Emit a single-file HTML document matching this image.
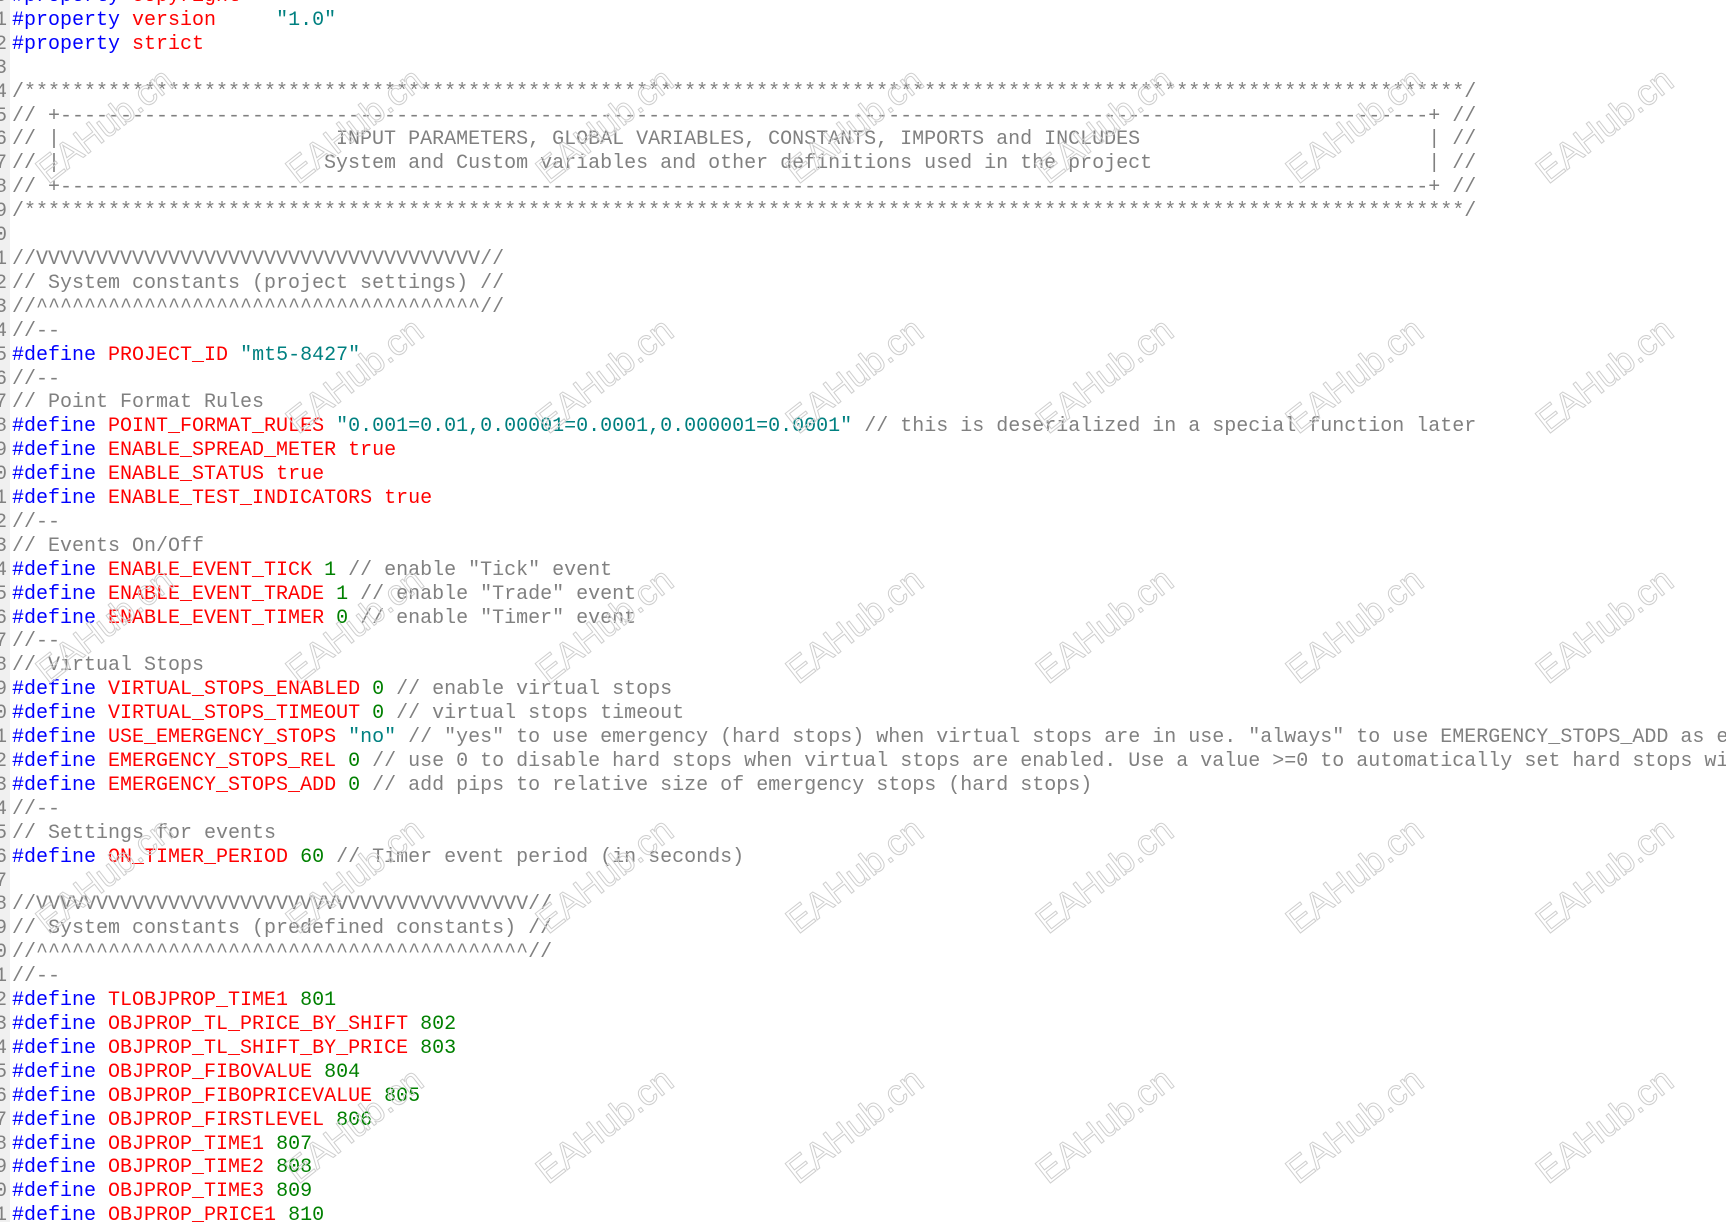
<!DOCTYPE html>
<html><head><meta charset="utf-8"><style>
html,body{margin:0;padding:0;background:#fff;width:1726px;height:1222px;overflow:hidden;position:relative}
#g{position:absolute;left:0;top:0;width:10px;height:1222px;background:#f0f0f0}
#gn{position:absolute;left:-5px;top:-15px;font:20px/23.9px "Liberation Mono",monospace;color:#808080;margin:0;white-space:pre}
#code{position:absolute;left:12px;top:-15px;width:1714px;overflow:hidden;font:20px/23.9px "Liberation Mono",monospace;margin:0;white-space:pre;color:#000}
.k{color:#0000ff}.r{color:#ff0000}.n{color:#008000}.s{color:#008080}.c{color:#808080}
#wm{position:absolute;left:0;top:0}
</style></head><body>
<div id="g"></div>
<pre id="gn">0
1
2
3
4
5
6
7
8
9
0
1
2
3
4
5
6
7
8
9
0
1
2
3
4
5
6
7
8
9
0
1
2
3
4
5
6
7
8
9
0
1
2
3
4
5
6
7
8
9
0
1</pre>
<pre id="code"><span class="k">#property</span> <span class="r">copyright</span>
<span class="k">#property</span> <span class="r">version</span>     <span class="s">"1.0"</span>
<span class="k">#property</span> <span class="r">strict</span>

<span class="c">/************************************************************************************************************************/</span>
<span class="c">// +------------------------------------------------------------------------------------------------------------------+ //</span>
<span class="c">// |                       INPUT PARAMETERS, GLOBAL VARIABLES, CONSTANTS, IMPORTS and INCLUDES                        | //</span>
<span class="c">// |                      System and Custom variables and other definitions used in the project                       | //</span>
<span class="c">// +------------------------------------------------------------------------------------------------------------------+ //</span>
<span class="c">/************************************************************************************************************************/</span>

<span class="c">//VVVVVVVVVVVVVVVVVVVVVVVVVVVVVVVVVVVVV//</span>
<span class="c">// System constants (project settings) //</span>
<span class="c">//^^^^^^^^^^^^^^^^^^^^^^^^^^^^^^^^^^^^^//</span>
<span class="c">//--</span>
<span class="k">#define</span> <span class="r">PROJECT_ID</span> <span class="s">"mt5-8427"</span>
<span class="c">//--</span>
<span class="c">// Point Format Rules</span>
<span class="k">#define</span> <span class="r">POINT_FORMAT_RULES</span> <span class="s">"0.001=0.01,0.00001=0.0001,0.000001=0.0001"</span> <span class="c">// this is deserialized in a special function later</span>
<span class="k">#define</span> <span class="r">ENABLE_SPREAD_METER</span> <span class="r">true</span>
<span class="k">#define</span> <span class="r">ENABLE_STATUS</span> <span class="r">true</span>
<span class="k">#define</span> <span class="r">ENABLE_TEST_INDICATORS</span> <span class="r">true</span>
<span class="c">//--</span>
<span class="c">// Events On/Off</span>
<span class="k">#define</span> <span class="r">ENABLE_EVENT_TICK</span> <span class="n">1</span> <span class="c">// enable "Tick" event</span>
<span class="k">#define</span> <span class="r">ENABLE_EVENT_TRADE</span> <span class="n">1</span> <span class="c">// enable "Trade" event</span>
<span class="k">#define</span> <span class="r">ENABLE_EVENT_TIMER</span> <span class="n">0</span> <span class="c">// enable "Timer" event</span>
<span class="c">//--</span>
<span class="c">// Virtual Stops</span>
<span class="k">#define</span> <span class="r">VIRTUAL_STOPS_ENABLED</span> <span class="n">0</span> <span class="c">// enable virtual stops</span>
<span class="k">#define</span> <span class="r">VIRTUAL_STOPS_TIMEOUT</span> <span class="n">0</span> <span class="c">// virtual stops timeout</span>
<span class="k">#define</span> <span class="r">USE_EMERGENCY_STOPS</span> <span class="s">"no"</span> <span class="c">// "yes" to use emergency (hard stops) when virtual stops are in use. "always" to use EMERGENCY_STOPS_ADD as emergency stops</span>
<span class="k">#define</span> <span class="r">EMERGENCY_STOPS_REL</span> <span class="n">0</span> <span class="c">// use 0 to disable hard stops when virtual stops are enabled. Use a value >=0 to automatically set hard stops with</span>
<span class="k">#define</span> <span class="r">EMERGENCY_STOPS_ADD</span> <span class="n">0</span> <span class="c">// add pips to relative size of emergency stops (hard stops)</span>
<span class="c">//--</span>
<span class="c">// Settings for events</span>
<span class="k">#define</span> <span class="r">ON_TIMER_PERIOD</span> <span class="n">60</span> <span class="c">// Timer event period (in seconds)</span>

<span class="c">//VVVVVVVVVVVVVVVVVVVVVVVVVVVVVVVVVVVVVVVVV//</span>
<span class="c">// System constants (predefined constants) //</span>
<span class="c">//^^^^^^^^^^^^^^^^^^^^^^^^^^^^^^^^^^^^^^^^^//</span>
<span class="c">//--</span>
<span class="k">#define</span> <span class="r">TLOBJPROP_TIME1</span> <span class="n">801</span>
<span class="k">#define</span> <span class="r">OBJPROP_TL_PRICE_BY_SHIFT</span> <span class="n">802</span>
<span class="k">#define</span> <span class="r">OBJPROP_TL_SHIFT_BY_PRICE</span> <span class="n">803</span>
<span class="k">#define</span> <span class="r">OBJPROP_FIBOVALUE</span> <span class="n">804</span>
<span class="k">#define</span> <span class="r">OBJPROP_FIBOPRICEVALUE</span> <span class="n">805</span>
<span class="k">#define</span> <span class="r">OBJPROP_FIRSTLEVEL</span> <span class="n">806</span>
<span class="k">#define</span> <span class="r">OBJPROP_TIME1</span> <span class="n">807</span>
<span class="k">#define</span> <span class="r">OBJPROP_TIME2</span> <span class="n">808</span>
<span class="k">#define</span> <span class="r">OBJPROP_TIME3</span> <span class="n">809</span>
<span class="k">#define</span> <span class="r">OBJPROP_PRICE1</span> <span class="n">810</span></pre>
<svg id="wm" width="1726" height="1222" xmlns="http://www.w3.org/2000/svg">
<defs><style>text{font-family:"Liberation Sans",sans-serif;font-size:36px;fill:none;stroke:#cfcfcf;stroke-width:1}</style></defs>
<g>
<text transform="translate(112,135) rotate(-38)" text-anchor="middle">EAHub.cn</text>
<text transform="translate(362,135) rotate(-38)" text-anchor="middle">EAHub.cn</text>
<text transform="translate(612,135) rotate(-38)" text-anchor="middle">EAHub.cn</text>
<text transform="translate(862,135) rotate(-38)" text-anchor="middle">EAHub.cn</text>
<text transform="translate(1112,135) rotate(-38)" text-anchor="middle">EAHub.cn</text>
<text transform="translate(1362,135) rotate(-38)" text-anchor="middle">EAHub.cn</text>
<text transform="translate(1612,135) rotate(-38)" text-anchor="middle">EAHub.cn</text>
<text transform="translate(362,385) rotate(-38)" text-anchor="middle">EAHub.cn</text>
<text transform="translate(612,385) rotate(-38)" text-anchor="middle">EAHub.cn</text>
<text transform="translate(862,385) rotate(-38)" text-anchor="middle">EAHub.cn</text>
<text transform="translate(1112,385) rotate(-38)" text-anchor="middle">EAHub.cn</text>
<text transform="translate(1362,385) rotate(-38)" text-anchor="middle">EAHub.cn</text>
<text transform="translate(1612,385) rotate(-38)" text-anchor="middle">EAHub.cn</text>
<text transform="translate(112,635) rotate(-38)" text-anchor="middle">EAHub.cn</text>
<text transform="translate(362,635) rotate(-38)" text-anchor="middle">EAHub.cn</text>
<text transform="translate(612,635) rotate(-38)" text-anchor="middle">EAHub.cn</text>
<text transform="translate(862,635) rotate(-38)" text-anchor="middle">EAHub.cn</text>
<text transform="translate(1112,635) rotate(-38)" text-anchor="middle">EAHub.cn</text>
<text transform="translate(1362,635) rotate(-38)" text-anchor="middle">EAHub.cn</text>
<text transform="translate(1612,635) rotate(-38)" text-anchor="middle">EAHub.cn</text>
<text transform="translate(112,885) rotate(-38)" text-anchor="middle">EAHub.cn</text>
<text transform="translate(362,885) rotate(-38)" text-anchor="middle">EAHub.cn</text>
<text transform="translate(612,885) rotate(-38)" text-anchor="middle">EAHub.cn</text>
<text transform="translate(862,885) rotate(-38)" text-anchor="middle">EAHub.cn</text>
<text transform="translate(1112,885) rotate(-38)" text-anchor="middle">EAHub.cn</text>
<text transform="translate(1362,885) rotate(-38)" text-anchor="middle">EAHub.cn</text>
<text transform="translate(1612,885) rotate(-38)" text-anchor="middle">EAHub.cn</text>
<text transform="translate(362,1135) rotate(-38)" text-anchor="middle">EAHub.cn</text>
<text transform="translate(612,1135) rotate(-38)" text-anchor="middle">EAHub.cn</text>
<text transform="translate(862,1135) rotate(-38)" text-anchor="middle">EAHub.cn</text>
<text transform="translate(1112,1135) rotate(-38)" text-anchor="middle">EAHub.cn</text>
<text transform="translate(1362,1135) rotate(-38)" text-anchor="middle">EAHub.cn</text>
<text transform="translate(1612,1135) rotate(-38)" text-anchor="middle">EAHub.cn</text>
</g>
</svg>
</body></html>
